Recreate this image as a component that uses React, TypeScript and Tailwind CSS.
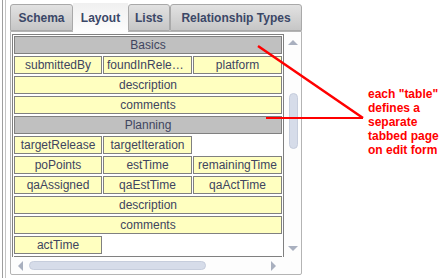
const FONT = { fontFamily: '"Liberation Sans", Arial, sans-serif' };

type Cell = { text: string; span?: number; head?: boolean; empty?: boolean };

const ROWS: Cell[][] = [
  [{ text: 'Basics', span: 3, head: true }],
  [{ text: 'submittedBy' }, { text: 'foundInRelease' }, { text: 'platform' }],
  [{ text: 'description', span: 3 }],
  [{ text: 'comments', span: 3 }],
  [{ text: 'Planning', span: 3, head: true }],
  [{ text: 'targetRelease' }, { text: 'targetIteration' }, { text: '', empty: true }],
  [{ text: 'poPoints' }, { text: 'estTime' }, { text: 'remainingTime' }],
  [{ text: 'qaAssigned' }, { text: 'qaEstTime' }, { text: 'qaActTime' }],
  [{ text: 'description', span: 3 }],
  [{ text: 'comments', span: 3 }],
  [{ text: 'actTime' }, { text: '', empty: true }, { text: '', empty: true }],
  // next row, scrolled out of view (only its top border shows)
  [{ text: '', span: 3, head: true }],
];

function Arrow({ dir }: { dir: 'up' | 'down' | 'left' | 'right' }) {
  const pts = {
    up: '0,5 5,0 10,5',
    down: '0,0 5,5 10,0',
    left: '5,0 0,5 5,10',
    right: '0,0 5,5 0,10',
  }[dir];
  const vert = dir === 'up' || dir === 'down';
  return (
    <svg width={vert ? 10 : 5} height={vert ? 5 : 10} className="shrink-0">
      <polygon points={pts} fill="#a9b0bf" />
    </svg>
  );
}

function Tab({ label, w, active }: { label: string; w: string; active?: boolean }) {
  if (active) {
    return (
      <div className={`${w} h-[29px] -mb-[1px] flex items-center justify-center bg-gradient-to-b from-[#f0f0f0] to-[#fdfdfd] text-[12px] font-bold text-[#3b4767] relative z-10`}>
        {label}
      </div>
    );
  }
  return (
    <div className={`${w} h-[27px] flex items-center justify-center border border-[#a9a9a9] rounded-t-[3px] bg-gradient-to-b from-[#e2e2e2] to-[#c6c6c6] text-[12px] font-bold text-[#3b4767]`}>
      {label}
    </div>
  );
}

export default function App() {
  return (
    <div className="relative w-[443px] h-[278px] bg-white flex overflow-hidden" style={FONT}>
      {/* left frame lines */}
      <div className="w-[2px]" />
      <div className="w-[1px] h-full bg-[#9e9e9e]" />
      <div className="w-[2px]" />
      <div className="w-[1px] h-full bg-[#c4c4c4]" />
      <div className="w-[4px]" />

      <div className="flex flex-col w-[292px] pt-[2px]">
        {/* tabs */}
        <div className="flex items-end h-[29px]">
          <Tab label="Schema" w="w-[63px]" />
          <Tab label="Layout" w="w-[55px]" active />
          <Tab label="Lists" w="w-[42px]" />
          <Tab label="Relationship Types" w="w-[132px]" />
        </div>

        {/* panel */}
        <div className="flex flex-col h-[244px] border border-[#b4b4b4] rounded-b-[2px] bg-[#fdfdfd]">
          <div className="flex h-[225px]">
            <div className="w-[273px] h-full overflow-hidden pl-[1px] pt-[2px]">
              <div className="w-[272px] border border-[#808080] p-[1px] bg-white">
                <div className="grid grid-cols-[88px_89px_89px] gap-x-[1px] gap-y-[2px]">
                  {ROWS.flatMap((row, ri) =>
                    row.map((c, ci) =>
                      c.empty ? (
                        <div key={`${ri}-${ci}`} className="h-[18px]" />
                      ) : (
                        <div
                          key={`${ri}-${ci}`}
                          className={`h-[18px] border border-[#808080] px-[3px] text-center truncate text-[12px] leading-[16px] text-[#40455f] ${
                            c.span === 3 ? 'col-span-3' : ''
                          } ${c.head ? 'bg-[#c0c0c0]' : 'bg-[#ffffc0]'}`}
                        >
                          {c.text}
                        </div>
                      )
                    )
                  )}
                </div>
              </div>
            </div>

            {/* vertical scrollbar */}
            <div className="w-[17px] h-full flex flex-col items-center">
              <div className="mt-[8px] ml-[1px]">
                <Arrow dir="up" />
              </div>
              <div className="mt-[48px] ml-[1px] w-[9px] h-[56px] rounded-full bg-[#d6dce9] border border-[#c6cddc]" />
              <div className="flex-1" />
              <div className="mb-[6px] ml-[1px]">
                <Arrow dir="down" />
              </div>
            </div>
          </div>

          {/* horizontal scrollbar */}
          <div className="flex h-[17px]">
            <div className="w-[273px] h-full flex items-center">
              <div className="ml-[7px]">
                <Arrow dir="left" />
              </div>
              <div className="ml-[6px] w-[177px] h-[9px] rounded-full bg-[#d6dce9] border border-[#c6cddc]" />
              <div className="flex-1" />
              <div className="mr-[8px]">
                <Arrow dir="right" />
              </div>
            </div>
            <div className="w-[17px]" />
          </div>
        </div>
      </div>

      {/* annotation overlay */}
      <svg className="absolute inset-0 pointer-events-none" width={443} height={278}>
        <line x1={258} y1={46} x2={363} y2={118} stroke="#ff0000" strokeWidth={2.5} />
        <line x1={266} y1={118} x2={363} y2={118} stroke="#ff0000" strokeWidth={2} />
      </svg>
      <div className="absolute left-[368px] top-[87px] text-[12px] leading-[14px] font-bold text-[#ff0000]">
        <div>each "table"</div>
        <div>defines a</div>
        <div>separate</div>
        <div>tabbed page</div>
        <div>on edit form</div>
      </div>
    </div>
  );
}
